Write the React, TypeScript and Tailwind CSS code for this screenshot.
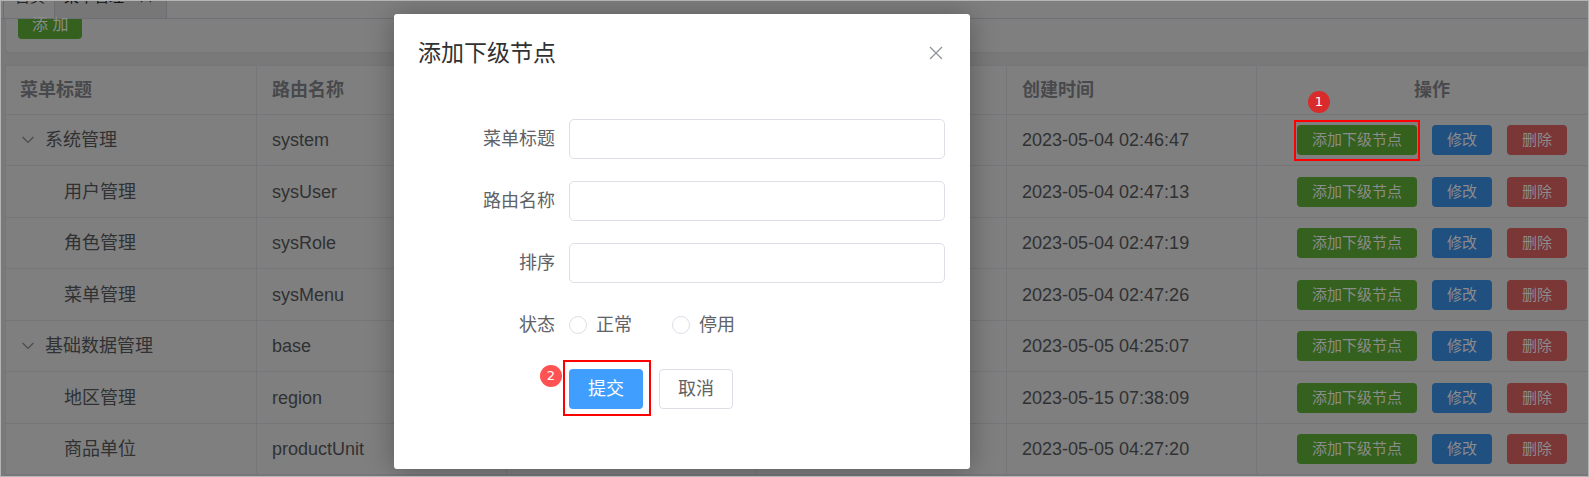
import { useState } from "react";

type Row = {
  title: string;
  route: string;
  created: string;
  parent?: boolean;
  marked?: boolean;
};

const rows: Row[] = [
  { title: "系统管理", route: "system", created: "2023-05-04 02:46:47", parent: true, marked: true },
  { title: "用户管理", route: "sysUser", created: "2023-05-04 02:47:13" },
  { title: "角色管理", route: "sysRole", created: "2023-05-04 02:47:19" },
  { title: "菜单管理", route: "sysMenu", created: "2023-05-04 02:47:26" },
  { title: "基础数据管理", route: "base", created: "2023-05-05 04:25:07", parent: true },
  { title: "地区管理", route: "region", created: "2023-05-15 07:38:09" },
  { title: "商品单位", route: "productUnit", created: "2023-05-05 04:27:20" },
];

function Badge({ n, className }: { n: number; className: string }) {
  return (
    <span
      className={`absolute flex size-[22px] items-center justify-center rounded-full font-['DejaVu_Sans',sans-serif] text-[13px] text-white ${className}`}
    >
      {n}
    </span>
  );
}

function Chevron() {
  return (
    <svg viewBox="0 0 12 8" className="h-2 w-3" fill="none" stroke="#4a4b4d" strokeWidth="1.2" aria-hidden="true">
      <path d="M0.6 1 L6 6.4 L11.4 1" />
    </svg>
  );
}

function TableRow({ row }: { row: Row }) {
  const small = "h-[30px] rounded-[4px] px-[15px] text-[15px] text-[#8c8c8c]";
  return (
    <tr className="odd:h-[51px] even:h-[52px]">
      <td className="border-r border-b border-[#75757a] px-[14px]">
        {row.parent ? (
          <span className="flex items-center gap-[11px]">
            <button type="button" aria-label="折叠" className="flex pl-[2px]">
              <Chevron />
            </button>
            {row.title}
          </span>
        ) : (
          <span className="block pl-[44px]">{row.title}</span>
        )}
      </td>
      <td className="border-r border-b border-[#75757a] px-[15px]">{row.route}</td>
      <td className="border-r border-b border-[#75757a]" />
      <td className="border-r border-b border-[#75757a]" />
      <td className="border-r border-b border-[#75757a] px-[15px]">{row.created}</td>
      <td className="border-b border-[#75757a]">
        <div className="flex justify-center gap-[15px]">
          <span className="relative flex">
            <button type="button" className={`${small} bg-[#34611d]`}>添加下级节点</button>
            {row.marked && (
              <>
                <span className="pointer-events-none absolute -inset-x-[3px] -top-[5px] -bottom-[6px] border-2 border-[#ff0000]" />
                <Badge n={1} className="-top-[34px] left-[11px] bg-[#d92b2b]" />
              </>
            )}
          </span>
          <button type="button" className={`${small} bg-[#205080]`}>修改</button>
          <button type="button" className={`${small} bg-[#7b3636]`}>删除</button>
        </div>
      </td>
    </tr>
  );
}

function TextField({ id, label }: { id: string; label: string }) {
  return (
    <div className="flex items-center gap-[14px]">
      <label htmlFor={id} className="w-[136px] text-right">
        {label}
      </label>
      <input
        id={id}
        type="text"
        className="h-10 min-w-0 flex-1 rounded-[5px] border border-[#dcdfe6] bg-white px-4 outline-none"
      />
    </div>
  );
}

function Dialog() {
  const [status, setStatus] = useState("");
  const radio = "size-[18px] appearance-none rounded-full border border-[#dcdfe6] bg-white checked:border-[5px] checked:border-[#409eff]";
  return (
    <section
      role="dialog"
      aria-labelledby="dialog-title"
      className="absolute top-[13px] left-[393px] w-[576px] rounded-[3px] bg-white pb-[60px] text-lg text-[#606266] shadow-[0_1px_28px_rgba(0,0,0,0.3)]"
    >
      <header className="flex items-center justify-between pt-[24px] pr-[27px] pl-[24px]">
        <h2 id="dialog-title" className="text-[23px] leading-[30px] text-[#303133]">
          添加下级节点
        </h2>
        <button type="button" aria-label="关闭">
          <svg viewBox="0 0 14 14" className="size-[14px]" fill="none" stroke="#909399" strokeWidth="1.3">
            <path d="M1 1 L13 13 M13 1 L1 13" />
          </svg>
        </button>
      </header>
      <form className="px-[25px] pt-[51px]" onSubmit={(e) => e.preventDefault()}>
        <div className="flex flex-col gap-[22px]">
          <TextField id="menu-title" label="菜单标题" />
          <TextField id="route-name" label="路由名称" />
          <TextField id="sort" label="排序" />
          <div className="flex h-10 items-center gap-[14px]" role="radiogroup" aria-labelledby="status-label">
            <span id="status-label" className="w-[136px] text-right">
              状态
            </span>
            <div className="flex gap-10">
              {["正常", "停用"].map((option) => (
                <label key={option} className="flex items-center gap-[9px]">
                  <input
                    type="radio"
                    name="status"
                    value={option}
                    checked={status === option}
                    onChange={() => setStatus(option)}
                    className={radio}
                  />
                  {option}
                </label>
              ))}
            </div>
          </div>
        </div>
        <div className="flex gap-4 pt-6 pl-[150px]">
          <span className="relative flex">
            <button type="submit" className="h-10 rounded-[4px] bg-[#409eff] px-[19px] text-white">
              提交
            </button>
            <span className="pointer-events-none absolute -top-[9px] -right-[8px] -bottom-[7px] -left-[6px] border-2 border-[#ff0000]" />
            <Badge n={2} className="-top-[4px] -left-[29px] bg-[#ff5252]" />
          </span>
          <button type="button" className="h-10 rounded-[4px] border border-[#dcdfe6] bg-white px-[18px]">
            取消
          </button>
        </div>
      </form>
    </section>
  );
}

export default function App() {
  const head = "border-r border-b border-[#75757a] text-left";
  return (
    <div className="relative h-screen overflow-hidden border border-[#b4b4b4] bg-[#797979] font-['Liberation_Sans','Noto_Sans_CJK_SC',sans-serif]">
      <nav className="flex h-[18px] items-end overflow-hidden border-b border-[#6e6e76] bg-[#7f7f7f] pl-[2px] text-[15px] text-[#26272b]">
        <a href="#home" className="flex h-[34px] shrink-0 items-center border-x border-[#6c6d72] pr-[9px] pb-[8px] pl-[11px]">
          首页
        </a>
        <a
          href="#menu"
          className="flex h-[34px] shrink-0 items-center gap-4 border-r border-[#6c6d72] bg-[#777777] pr-[14px] pb-[8px] pl-[9px] text-[#111111]"
        >
          菜单管理
          <svg viewBox="0 0 12 12" className="size-3" fill="none" stroke="#2c2c2e" strokeWidth="1.2" aria-hidden="true">
            <path d="M1 1 L11 11 M11 1 L1 11" />
          </svg>
        </a>
      </nav>
      <main className="pl-[4px]">
        <div className="mb-[12px] flex h-[34px] items-start rounded-b-[4px] border-b border-l border-[#75757a] bg-[#7f7f7f] pl-[12px]">
          <button
            type="button"
            className="h-[20px] rounded-b-[4px] bg-[#34611d] px-[14px] pb-[9px] text-[16px] leading-[11px] text-[#8c8c8c]"
          >
            添 加
          </button>
        </div>
        <table className="w-[1602px] table-fixed border-separate border-spacing-0 border-t border-l border-[#75757a] bg-[#7f7f7f] text-lg leading-6 text-[#303133]">
          <colgroup>
            <col className="w-[251px]" />
            <col className="w-[250px]" />
            <col className="w-[250px]" />
            <col className="w-[250px]" />
            <col className="w-[250px]" />
            <col />
          </colgroup>
          <thead>
            <tr className="h-[49px] text-[#48494c]">
              <th className={`${head} px-[14px]`}>菜单标题</th>
              <th className={`${head} px-[15px]`}>路由名称</th>
              <th className={head} />
              <th className={head} />
              <th className={`${head} px-[15px]`}>创建时间</th>
              <th className="border-b border-[#75757a] text-center">操作</th>
            </tr>
          </thead>
          <tbody>
            {rows.map((row) => (
              <TableRow key={row.title} row={row} />
            ))}
          </tbody>
        </table>
      </main>
      <Dialog />
    </div>
  );
}
